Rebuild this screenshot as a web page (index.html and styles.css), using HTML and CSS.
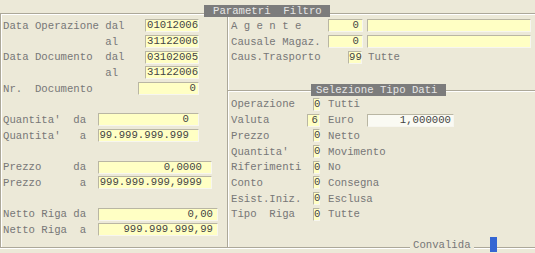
FILE: index.html
```html
<!DOCTYPE html>
<html lang="it">
<head>
  <meta charset="UTF-8" />
  <title>Parametri Filtro</title>
  <link rel="stylesheet" href="styles.css">
</head>
<body>
  <div class="panel">
    <div class="legend main-legend">Parametri  Filtro</div>

    <div class="col-left">
      <div class="row"><span class="lbl w-date">Data Operazione dal</span><span class="fld f-date">01012006</span></div>
      <div class="row"><span class="lbl w-date">                al</span><span class="fld f-date">31122006</span></div>
      <div class="row"><span class="lbl w-date">Data Documento  dal</span><span class="fld f-date">03102005</span></div>
      <div class="row"><span class="lbl w-date">                al</span><span class="fld f-date">31122006</span></div>
      <div class="row"><span class="lbl w-nr">Nr.  Documento</span><span class="fld f-nr">0</span></div>
      <div class="row"></div>
      <div class="row"><span class="lbl w-num">Quantita'  da</span><span class="fld f-qta">0</span></div>
      <div class="row"><span class="lbl w-num">Quantita'   a</span><span class="fld f-qta">99.999.999.999</span></div>
      <div class="row"></div>
      <div class="row"><span class="lbl w-num">Prezzo     da</span><span class="fld f-prz">0,0000</span></div>
      <div class="row"><span class="lbl w-num">Prezzo      a</span><span class="fld f-prz">999.999.999,9999</span></div>
      <div class="row"></div>
      <div class="row"><span class="lbl w-num">Netto Riga da</span><span class="fld f-net">0,00</span></div>
      <div class="row"><span class="lbl w-num">Netto Riga  a</span><span class="fld f-net">999.999.999,99</span></div>
    </div>

    <div class="col-right">
      <div class="row"><span class="lbl w-ag">A g e n t e</span><span class="fld f-code">0</span><span class="fld f-desc"></span></div>
      <div class="row"><span class="lbl w-ag">Causale Magaz.</span><span class="fld f-code">0</span><span class="fld f-desc"></span></div>
      <div class="row"><span class="lbl w-tr">Caus.Trasporto</span><span class="fld f-tr">99</span><span class="txt">Tutte</span></div>

      <div class="section">
        <div class="legend sec-legend">Selezione Tipo Dati</div>
        <div class="row"><span class="lbl w-sel">Operazione</span><span class="cell"><span class="fld f-one">0</span></span><span class="txt">Tutti</span></div>
        <div class="row"><span class="lbl w-sel">Valuta</span><span class="cell"><span class="fld f-val">6</span></span><span class="txt w-euro">Euro</span><span class="fld f-cambio">1,000000</span></div>
        <div class="row"><span class="lbl w-sel">Prezzo</span><span class="cell"><span class="fld f-one">0</span></span><span class="txt">Netto</span></div>
        <div class="row"><span class="lbl w-sel">Quantita'</span><span class="cell"><span class="fld f-one">0</span></span><span class="txt">Movimento</span></div>
        <div class="row"><span class="lbl w-sel">Riferimenti</span><span class="cell"><span class="fld f-one">0</span></span><span class="txt">No</span></div>
        <div class="row"><span class="lbl w-sel">Conto</span><span class="cell"><span class="fld f-one">0</span></span><span class="txt">Consegna</span></div>
        <div class="row"><span class="lbl w-sel">Esist.Iniz.</span><span class="cell"><span class="fld f-one">0</span></span><span class="txt">Esclusa</span></div>
        <div class="row"><span class="lbl w-sel">Tipo  Riga</span><span class="cell"><span class="fld f-one">0</span></span><span class="txt">Tutte</span></div>
      </div>
    </div>

    <div class="confirm"><span class="confirm-label">Convalida</span><i class="confirm-gap"></i><b class="confirm-mark"></b></div>
  </div>
</body>
</html>
```

FILE: styles.css
```css
body {
  margin: 0;
  background: #ece9d8;
  font-family: "Liberation Mono", monospace;
  font-size: 10.67px;
  color: #777;
  width: 535px;
  height: 253px;
  overflow: hidden;
}
.panel {
  position: relative;
  display: flex;
  margin-top: 13px;
  height: 235px;
  box-sizing: border-box;
  border: 1px solid #aca899;
  border-right: none;
  box-shadow: inset 1px 1px 0 #fff, 0 1px 0 #fff;
}
.legend {
  position: absolute;
  height: 12px;
  line-height: 12px;
  background: #7c7c7c;
  color: #e6e6e6;
  white-space: pre;
}
.main-legend {
  top: -9px;
  left: 203px;
  padding: 0 8px 0 9px;
}
.sec-legend {
  top: -7px;
  left: 83px;
  padding: 0 8px 0 5px;
}

.col-left {
  width: 227px;
  box-sizing: border-box;
  border-right: 1px solid #aca899;
  padding: 4px 0 0 2px;
}
.col-right {
  flex: 1;
  padding-top: 4px;
  box-shadow: inset 1px 0 0 #fff;
}
.col-right .row {
  padding-left: 3px;
}
.row {
  height: 15.7px;
  display: flex;
  align-items: center;
  white-space: pre;
}
.lbl {
  flex: none;
}
.txt {
  margin-left: 8px;
}

.fld {
  flex: none;
  box-sizing: border-box;
  height: 13px;
  line-height: 11px;
  background: #ffffc4;
  border: 1px solid;
  border-color: #b9b6a3 #f7f6ef #f7f6ef #b9b6a3;
  color: #444;
  text-align: right;
  overflow: visible;
}

/* colonna sinistra */
.w-date { width: 142px; }
.w-nr { width: 135px; }
.w-num { width: 95px; }
.f-date { width: 54px; text-align: left; padding-left: 1px; }
.f-nr { width: 61px; padding-right: 2px; }
.f-qta { width: 101px; padding-right: 9px; }
.f-prz { width: 114px; padding-right: 9px; }
.f-net { width: 120px; padding-right: 4px; }

/* colonna destra */
.w-ag { width: 97px; }
.f-code { width: 35px; padding-right: 3px; }
.f-desc { width: 164px; margin-left: 4px; }
.w-tr { width: 117px; }
.f-tr { width: 14px; padding-right: 1px; }
.f-tr + .txt { margin-left: 6px; }

.section {
  position: relative;
  margin-top: 24.9px;
  padding-top: 5.65px;
  border-top: 1px solid #aca899;
  box-shadow: inset 0 1px 0 #fff;
}
.w-sel { width: 76px; }
.cell {
  width: 13px;
  display: flex;
  justify-content: flex-end;
}
.f-one { width: 7px; text-align: center; }
.f-val { width: 13px; padding-right: 1px; }
.w-euro { width: 39px; }
.f-cambio {
  width: 87px;
  padding-right: 2px;
  background: #fafaf3;
}

.confirm {
  position: absolute;
  left: 409px;
  top: 223px;
  height: 15px;
  display: flex;
  align-items: center;
}
.confirm-label {
  background: #ece9d8;
  padding: 0 3px;
  line-height: 12px;
}
.confirm-gap {
  width: 16px;
}
.confirm-mark {
  width: 7px;
  height: 15px;
  background: #3466d3;
}
```
